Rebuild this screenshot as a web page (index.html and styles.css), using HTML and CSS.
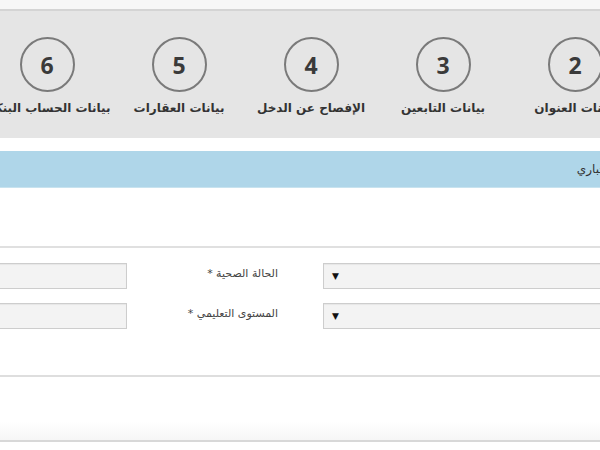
FILE: index.html
```html
<!DOCTYPE html>
<html lang="ar">
<head>
    <meta charset="UTF-8">
    <meta name="viewport" content="width=device-width, initial-scale=1.0">
    <title>بيانات الطلب</title>
    <link rel="stylesheet" href="styles.css">
</head>
<body>
    <div class="page">
        <div class="top-strip"></div>

        <div class="steps">
            <div class="step"><div class="circle">1</div><div class="step-label">البيانات الشخصية</div></div>
            <div class="step"><div class="circle">2</div><div class="step-label">بيانات العنوان</div></div>
            <div class="step"><div class="circle">3</div><div class="step-label">بيانات التابعين</div></div>
            <div class="step"><div class="circle">4</div><div class="step-label">الإفصاح عن الدخل</div></div>
            <div class="step"><div class="circle">5</div><div class="step-label">بيانات العقارات</div></div>
            <div class="step"><div class="circle">6</div><div class="step-label">بيانات الحساب البنكي</div></div>
            <div class="step"><div class="circle">7</div><div class="step-label">مراجعة الطلب</div></div>
        </div>

        <div class="section-title">
            <span>إجباري</span>
        </div>

        <div class="section-space"></div>

        <div class="form-box">
            <div class="form-row">
                <label class="field-label">الحالة الاجتماعية *</label>
                <div class="select"><span class="arrow">▼</span></div>
                <label class="field-label second">الحالة الصحية *</label>
                <div class="input"></div>
            </div>
            <div class="form-row">
                <label class="field-label">المهنة *</label>
                <div class="select"><span class="arrow">▼</span></div>
                <label class="field-label second">المستوى التعليمي *</label>
                <div class="input"></div>
            </div>
        </div>

        <div class="footer-box"></div>
    </div>
</body>
</html>
```

FILE: styles.css
```css
body {
    margin: 0;
    background-color: #fff;
    overflow: hidden;
    font-family: 'DejaVu Sans', 'Noto Sans', sans-serif;
}

.page {
    width: 940px;
    margin-left: -160px;
    direction: rtl;
}

.top-strip {
    height: 9px;
    background-color: #f7f7f7;
    border-bottom: 2px solid #d4d4d4;
}

/* شريط الخطوات */
.steps {
    height: 127px;
    background-color: #e5e5e5;
    display: flex;
    padding-right: 7px;
}

.step {
    width: 132px;
    flex-shrink: 0;
    display: flex;
    flex-direction: column;
    align-items: center;
    padding-top: 26px;
}

.circle {
    width: 51px;
    height: 51px;
    border: 2px solid #7a7a7a;
    border-radius: 50%;
    display: flex;
    align-items: center;
    justify-content: center;
    font-family: 'Open Sans', sans-serif;
    font-weight: 700;
    font-size: 23px;
    color: #3a3a3a;
}

.step-label {
    margin-top: 9px;
    font-size: 12px;
    font-weight: bold;
    color: #333;
    white-space: nowrap;
}

.section-title {
    margin-top: 13px;
    height: 36px;
    background-color: #afd6e9;
    border-bottom: 1px solid #c8e3ef;
    display: flex;
    align-items: center;
    padding-right: 170px;
    font-size: 12px;
    color: #333;
}

.section-space {
    height: 58px;
}

.form-box {
    border-top: 2px solid #e0e0e0;
    border-bottom: 2px solid #dedede;
    padding: 15px 20px 46px 0;
    display: flex;
    flex-direction: column;
    gap: 14px;
}

.form-row {
    display: grid;
    grid-template-columns: 120px 317px 196px 187px;
    align-items: center;
    height: 26px;
}

.field-label {
    font-size: 11px;
    color: #444;
    white-space: nowrap;
    margin-bottom: 6px;
}

.field-label.second {
    padding-right: 45px;
}

.select,
.input {
    height: 24px;
    background-color: #f3f3f3;
    border: 1px solid #cdcdcd;
    box-shadow: inset 0 1px 1px #e6e6e6;
}

.select {
    display: flex;
    align-items: center;
    justify-content: flex-end;
    padding-left: 8px;
}

.arrow {
    font-size: 9px;
    color: #111;
}

.footer-box {
    height: 63px;
    background: linear-gradient(to bottom, #fff 70%, #f6f6f6);
    border-bottom: 2px solid #d8d8d8;
}
```
